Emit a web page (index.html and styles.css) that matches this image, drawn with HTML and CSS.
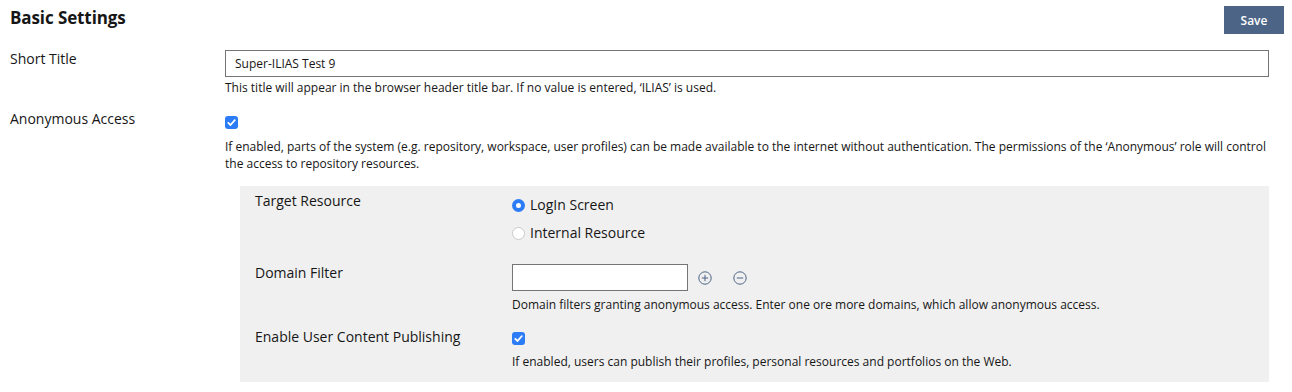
FILE: index.html
```html
<!DOCTYPE html>
<html lang="en">
<head>
    <meta charset="UTF-8">
    <meta name="viewport" content="width=device-width, initial-scale=1.0">
    <title>Basic Settings</title>
    <link rel="stylesheet" href="styles.css">
</head>
<body>
    <div class="settings-header">
        <h1>Basic Settings</h1>
        <button type="button" class="save-button">Save</button>
    </div>

    <form class="settings-form">
        <div class="form-row row-title">
            <div class="form-label">Short Title</div>
            <div class="form-field">
                <input type="text" class="text-input" value="Super-ILIAS Test 9">
                <div class="help-text">This title will appear in the browser header title bar. If no value is entered, ‘ILIAS’ is used.</div>
            </div>
        </div>

        <div class="form-row row-anon">
            <div class="form-label">Anonymous Access</div>
            <div class="form-field">
                <span class="checkbox">
                    <svg viewBox="0 0 13 13" width="13" height="13"><rect width="13" height="13" rx="3" fill="#2b7cf6"/><path d="M3.3 6.8 L5.5 9 L9.8 4.2" fill="none" stroke="#fff" stroke-width="1.8" stroke-linecap="round" stroke-linejoin="round"/></svg>
                </span>
                <div class="help-text help-anon">If enabled, parts of the system (e.g. repository, workspace, user profiles) can be made available to the internet without authentication. The permissions of the ‘Anonymous’ role will control the access to repository resources.</div>

                <div class="sub-panel">
                    <div class="sub-row row-target">
                        <div class="sub-label">Target Resource</div>
                        <div class="sub-field">
                            <div class="radio-option">
                                <svg viewBox="0 0 13 13" width="13" height="13"><circle cx="6.5" cy="6.5" r="6.5" fill="#2b7cf6"/><circle cx="6.5" cy="6.5" r="2.5" fill="#fff"/></svg>
                                <span>LogIn Screen</span>
                            </div>
                            <div class="radio-option">
                                <svg viewBox="0 0 13 13" width="13" height="13"><circle cx="6.5" cy="6.5" r="6" fill="#fff" stroke="#c9c9c9"/></svg>
                                <span>Internal Resource</span>
                            </div>
                        </div>
                    </div>

                    <div class="sub-row row-domain">
                        <div class="sub-label">Domain Filter</div>
                        <div class="sub-field">
                            <div class="domain-line">
                                <input type="text" class="text-input domain-input">
                                <span class="round-icon">
                                    <svg viewBox="0 0 14 14" width="14" height="14"><circle cx="7" cy="7" r="6.2" fill="none" stroke="#4c6586" stroke-width="1"/><path d="M7 3.8 V10.2 M3.8 7 H10.2" stroke="#4c6586" stroke-width="1"/></svg>
                                </span>
                                <span class="round-icon">
                                    <svg viewBox="0 0 14 14" width="14" height="14"><circle cx="7" cy="7" r="6.2" fill="none" stroke="#4c6586" stroke-width="1"/><path d="M3.8 7 H10.2" stroke="#4c6586" stroke-width="1"/></svg>
                                </span>
                            </div>
                            <div class="help-text help-domain">Domain filters granting anonymous access. Enter one ore more domains, which allow anonymous access.</div>
                        </div>
                    </div>

                    <div class="sub-row row-publish">
                        <div class="sub-label">Enable User Content Publishing</div>
                        <div class="sub-field">
                            <span class="checkbox checkbox-publish">
                                <svg viewBox="0 0 13 13" width="13" height="13"><rect width="13" height="13" rx="3" fill="#2b7cf6"/><path d="M3.3 6.8 L5.5 9 L9.8 4.2" fill="none" stroke="#fff" stroke-width="1.8" stroke-linecap="round" stroke-linejoin="round"/></svg>
                            </span>
                            <div class="help-text help-publish">If enabled, users can publish their profiles, personal resources and portfolios on the Web.</div>
                        </div>
                    </div>
                </div>
            </div>
        </div>
    </form>
</body>
</html>
```

FILE: styles.css
```css
:root {
    --text-color: #161616;
    --panel-color: #f0f0f0;
    --button-color: #4c6586;
    --border-color: #757575;
}

* {
    margin: 0;
    box-sizing: border-box;
}

body {
    font-family: "Open Sans", "Noto Sans", Arial, sans-serif;
    color: var(--text-color);
    background: white;
    width: 1292px;
    height: 392px;
    overflow: hidden;
}

.settings-header {
    display: flex;
    justify-content: space-between;
    align-items: flex-start;
    padding: 6px 8px 0 10px;
}

.settings-header h1 {
    font-size: 17px;
    font-weight: 700;
    line-height: 24px;
    letter-spacing: -0.1px;
}

.save-button {
    width: 60px;
    height: 28px;
    border: 0;
    background: var(--button-color);
    color: white;
    font-family: inherit;
    font-size: 12px;
    font-weight: 600;
    cursor: pointer;
}

.settings-form {
    padding: 0 23px 0 10px;
}

.form-row {
    display: grid;
    grid-template-columns: 215px 1fr;
}

.row-title {
    margin-top: 16px;
}

.row-anon {
    margin-top: 14px;
}

.form-label,
.sub-label {
    font-size: 14px;
    line-height: 17px;
}

.text-input {
    display: block;
    width: 100%;
    height: 27px;
    border: 1px solid var(--border-color);
    padding: 0 9px;
    font-family: inherit;
    font-size: 12px;
    color: var(--text-color);
    background: white;
    outline: none;
}

.help-text {
    font-size: 12px;
    line-height: 17px;
    margin-top: 2px;
}

.checkbox {
    display: block;
    width: 13px;
    height: 13px;
    margin-top: 6px;
}

.checkbox svg {
    display: block;
}

.help-anon {
    margin-top: 9px;
}

.sub-panel {
    margin-top: 14px;
    margin-left: 15px;
    background: var(--panel-color);
    padding: 6px 0 12px 15px;
}

.sub-row {
    display: grid;
    grid-template-columns: 257px 1fr;
}

.radio-option {
    display: flex;
    align-items: center;
    gap: 5px;
    font-size: 14px;
    line-height: 20px;
    margin-top: 3px;
}

.radio-option + .radio-option {
    margin-top: 8px;
}

.radio-option svg {
    display: block;
}

.row-domain {
    margin-top: 21px;
}

.domain-line {
    display: flex;
    align-items: center;
}

.domain-input {
    width: 176px;
}

.round-icon {
    display: block;
    width: 14px;
    height: 14px;
    margin-left: 10px;
}

.round-icon + .round-icon {
    margin-left: 21px;
}

.round-icon svg {
    display: block;
}

.help-domain {
    margin-top: 5px;
}

.row-publish {
    margin-top: 15px;
}

.checkbox-publish {
    margin-top: 4px;
}

.help-publish {
    margin-top: 8px;
}
```
